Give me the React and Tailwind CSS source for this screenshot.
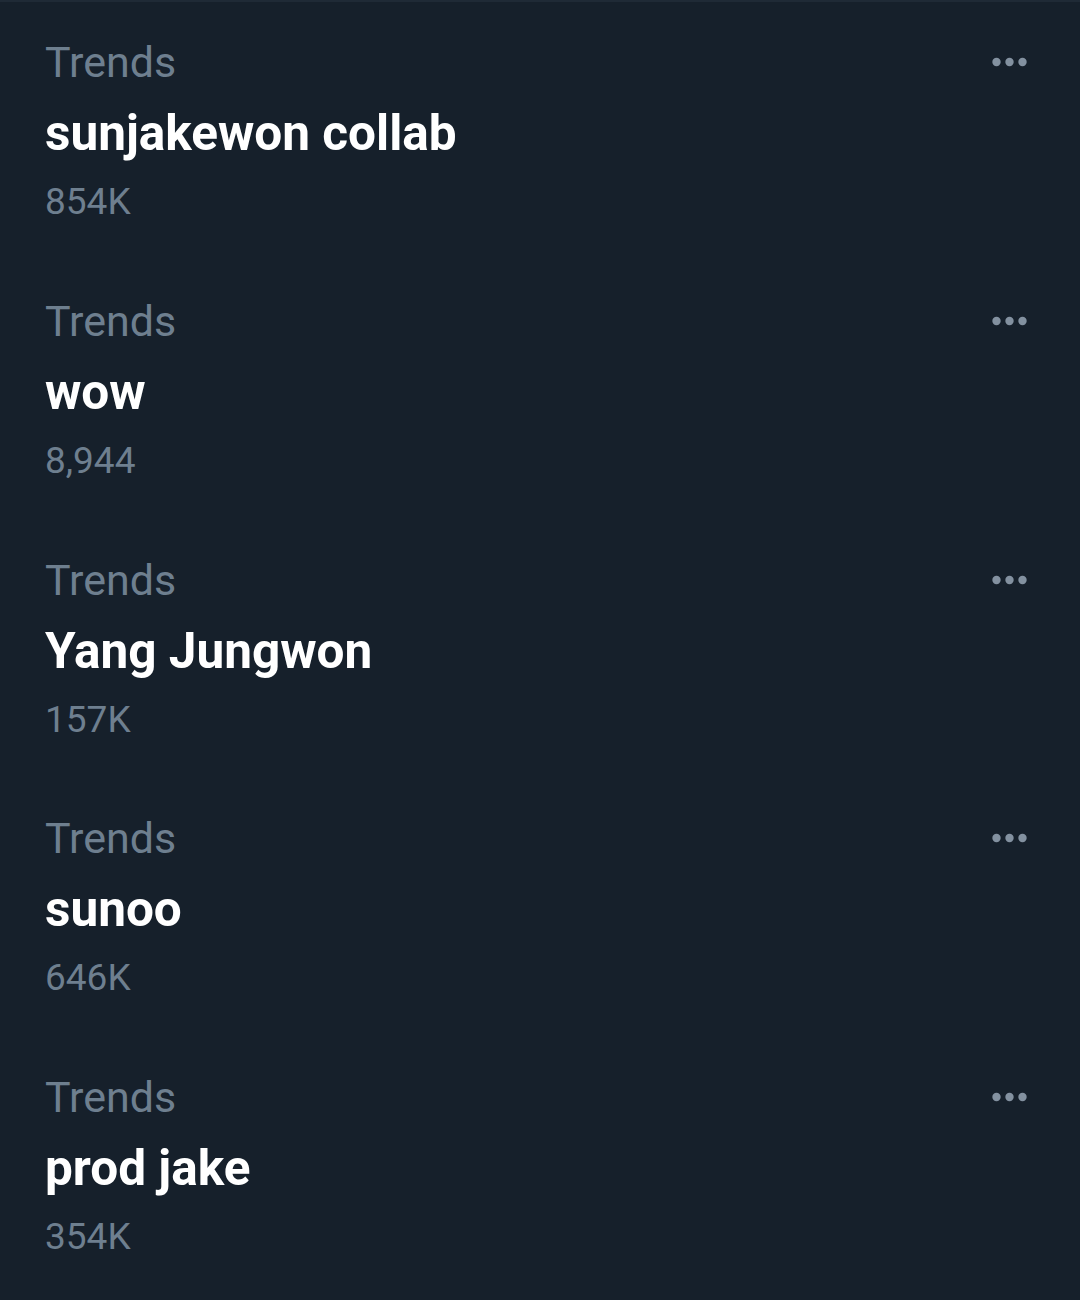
import React from 'react';

const trends = [
  { name: 'sunjakewon collab', count: '854K' },
  { name: 'wow', count: '8,944' },
  { name: 'Yang Jungwon', count: '157K' },
  { name: 'sunoo', count: '646K' },
  { name: 'prod jake', count: '354K' },
];

const Dots = () => (
  <svg width="36" height="10" viewBox="0 0 36 10" className="fill-[#8391a0]">
    <circle cx="4.5" cy="5" r="4.2" />
    <circle cx="17.5" cy="5" r="4.2" />
    <circle cx="30.5" cy="5" r="4.2" />
  </svg>
);

const App = () => {
  return (
    <div
      className="w-[1080px] h-[1300px] bg-[#16202b] border-t-2 border-[#1f2a36] overflow-hidden"
      style={{ fontFamily: 'Roboto, "Noto Sans", sans-serif' }}
    >
      <div className="pt-[35px] pl-[45px] pr-[52px]">
        {trends.map(t => (
          <div key={t.name} className="flex justify-between pb-[68.8px]">
            <div className="flex flex-col">
              <div className="text-[43px] leading-[50px] text-[#6e7f8f]">Trends</div>
              <div className="mt-[16px] text-[49.5px] leading-[60px] font-bold text-white">{t.name}</div>
              <div className="mt-[14px] text-[37px] leading-[50px] text-[#6e7f8f]">{t.count}</div>
            </div>
            <div className="h-[50px] flex items-center">
              <Dots />
            </div>
          </div>
        ))}
      </div>
    </div>
  );
};

export default App;
